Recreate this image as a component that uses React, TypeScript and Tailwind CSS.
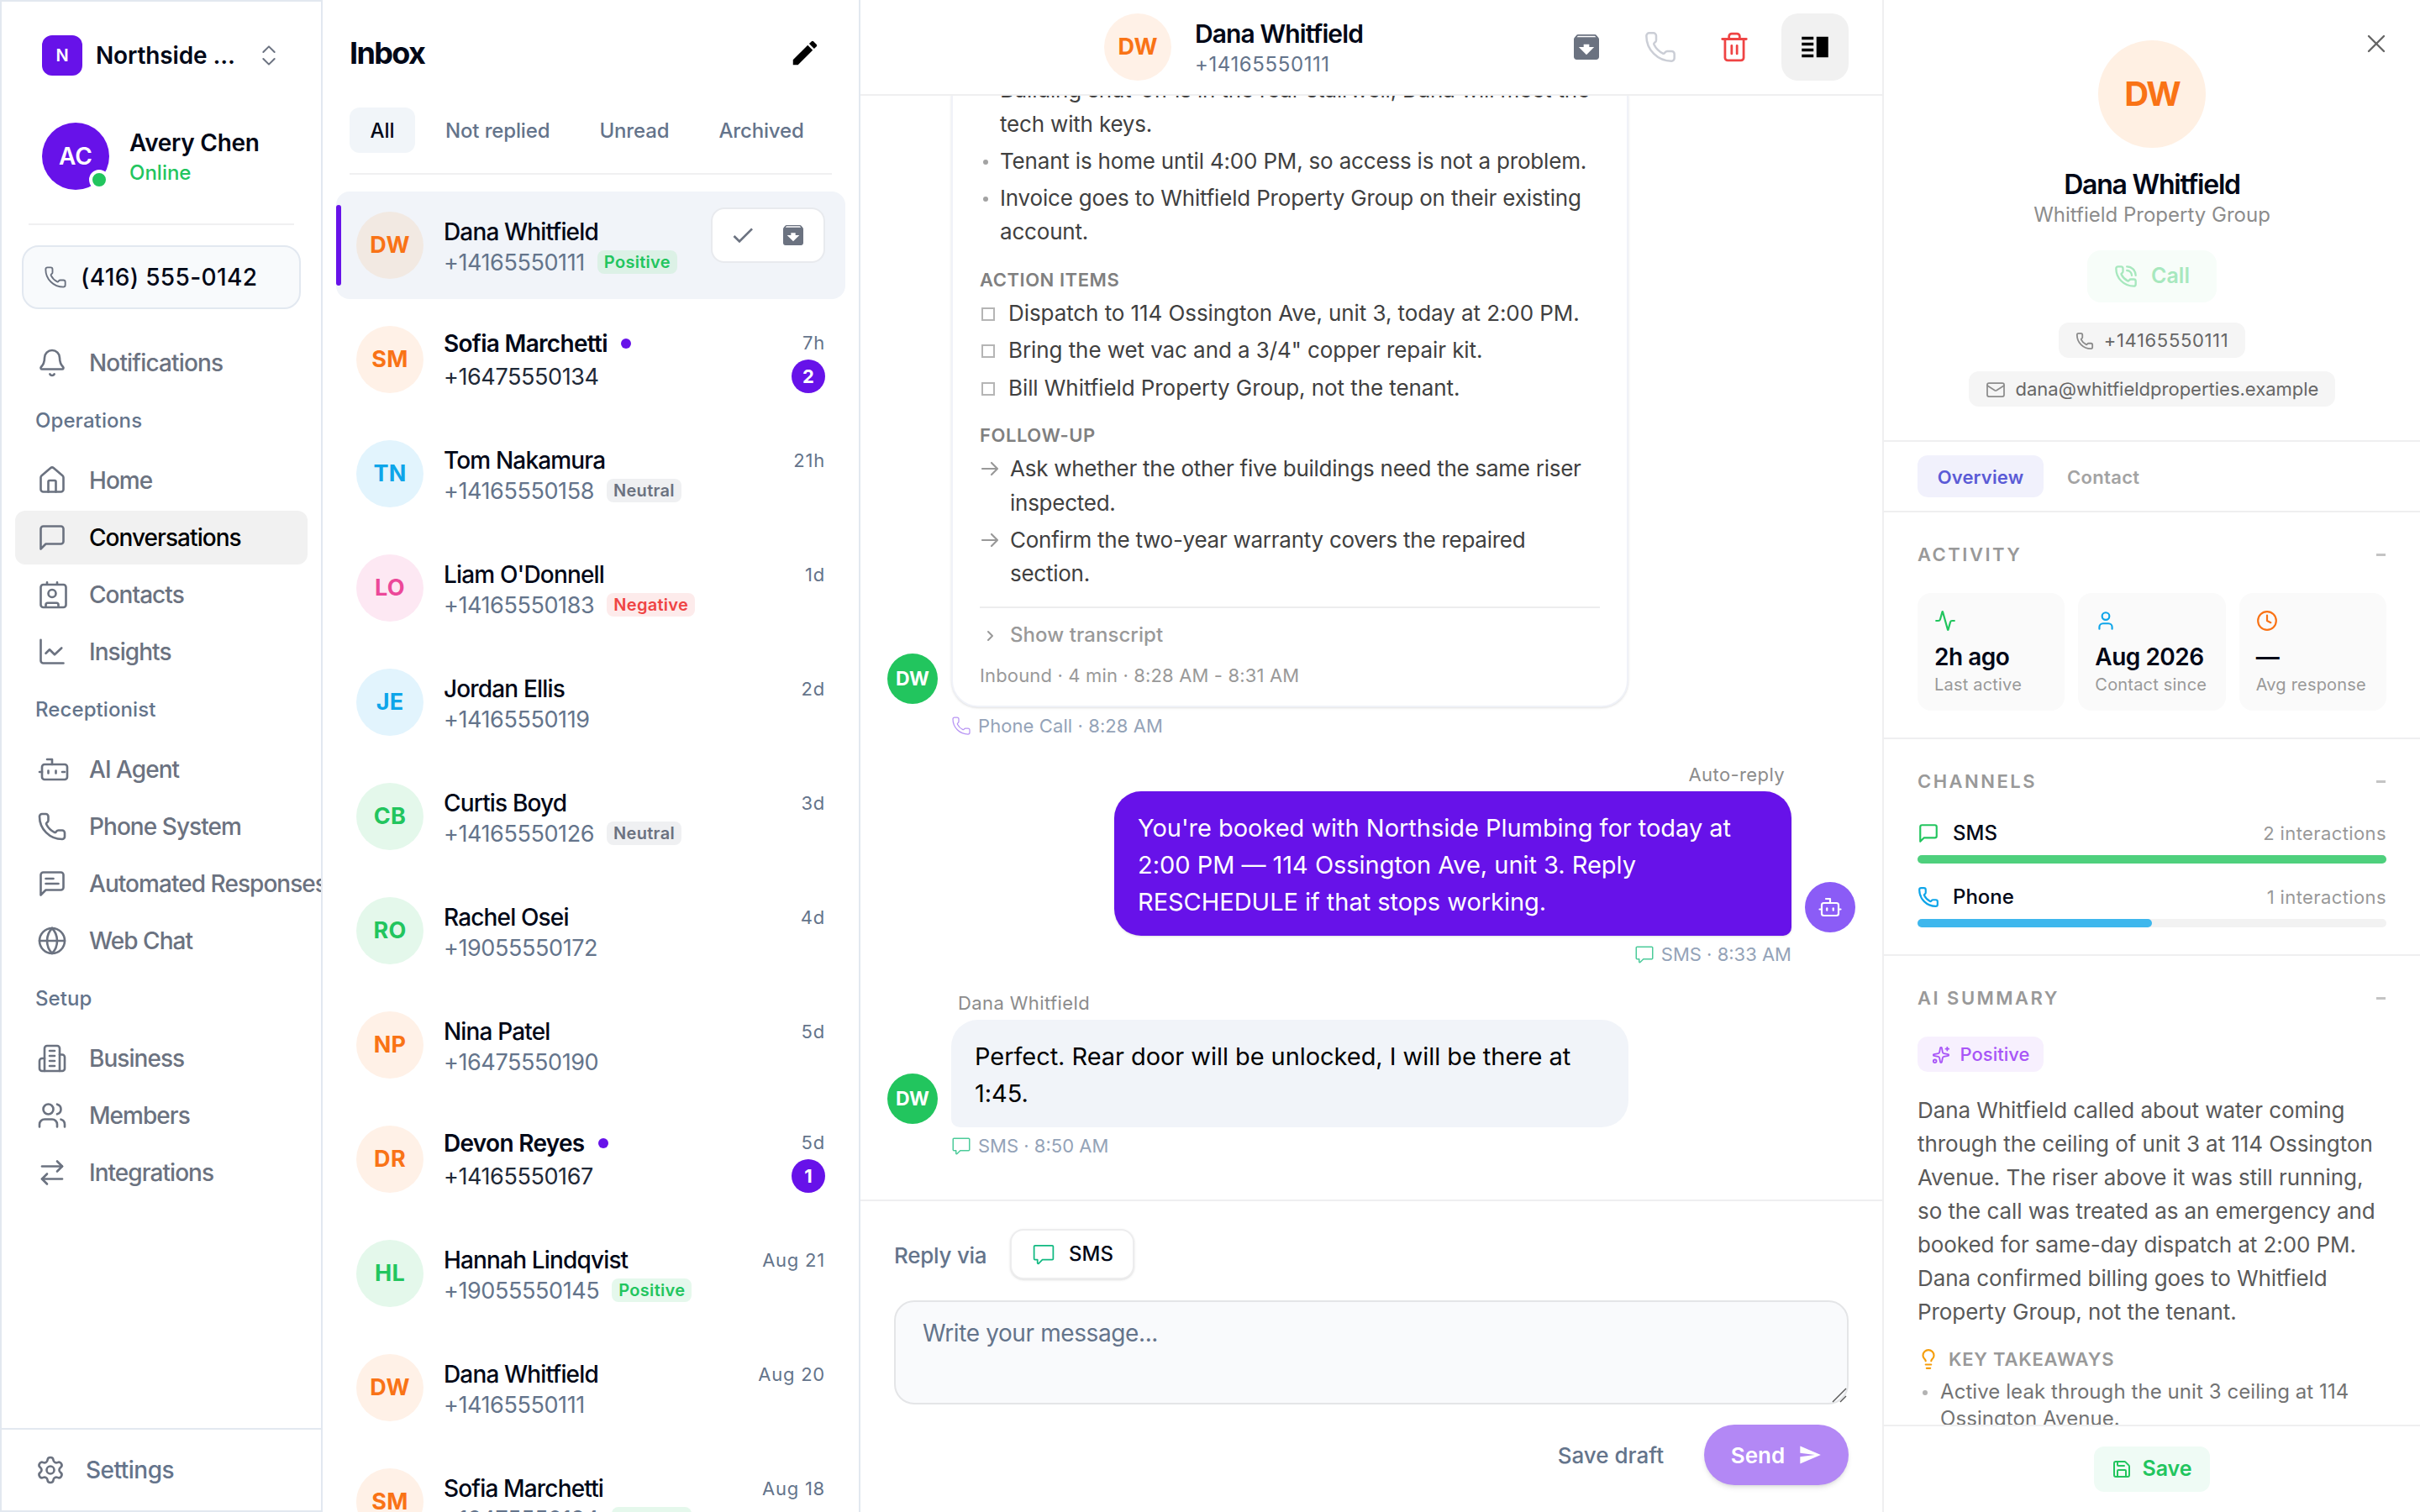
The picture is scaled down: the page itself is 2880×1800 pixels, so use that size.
import type { ReactNode } from "react";
import {
    Activity,
    ArrowRightLeft,
    Bell,
    Bot,
    ChevronsUpDown,
    Clock,
    Globe,
    Lightbulb,
    Mail,
    Phone,
    PhoneCall,
    Save,
    Settings,
    Sparkles,
    Trash2,
    User,
    Users,
    X,
} from "lucide-react";
import { MdArchive, MdCheck, MdEdit, MdSend, MdVerticalSplit } from "react-icons/md";
import { GoComment } from "react-icons/go";

type IconProps = { className?: string; strokeWidth?: number };

function Outline({ className, strokeWidth = 1.75, children }: IconProps & { children: ReactNode }) {
    return (
        <svg viewBox="0 0 24 24" fill="none" stroke="currentColor" strokeWidth={strokeWidth} strokeLinecap="round" strokeLinejoin="round" className={`overflow-visible ${className}`}>
            {children}
        </svg>
    );
}

const HomeIcon = (p: IconProps) => (
    <Outline {...p}>
        <path d="M3 9.7a2 2 0 0 1 .7-1.5l7-6a2 2 0 0 1 2.6 0l7 6a2 2 0 0 1 .7 1.5V19a2 2 0 0 1-2 2H5a2 2 0 0 1-2-2z" />
        <path d="M9 21v-8a1 1 0 0 1 1-1h4a1 1 0 0 1 1 1v8" />
    </Outline>
);

const BubbleIcon = (p: IconProps) => (
    <Outline {...p}>
        <path d="M21 15a2 2 0 0 1-2 2H7l-4 4V5a2 2 0 0 1 2-2h14a2 2 0 0 1 2 2z" />
    </Outline>
);

const BubbleTextIcon = (p: IconProps) => (
    <Outline {...p}>
        <path d="M21 15a2 2 0 0 1-2 2H7l-4 4V5a2 2 0 0 1 2-2h14a2 2 0 0 1 2 2z" />
        <path d="M13 8H7M17 12H7" />
    </Outline>
);

const ContactIcon = (p: IconProps) => (
    <Outline {...p}>
        <rect x="3" y="4" width="20" height="18" rx="2" />
        <circle cx="12" cy="11" r="3" />
        <path d="M8 2.2v1.6M16 2.2v1.6M7 21.5v-1.5a1.5 1.5 0 0 1 1.5-1.5h7a1.5 1.5 0 0 1 1.5 1.5v1.5" />
    </Outline>
);

const InsightsIcon = (p: IconProps) => (
    <Outline {...p}>
        <path d="M3 2.5V19a2 2 0 0 0 2 2h16" />
        <path d="m7 13.2 3-3 4 4 5.5-5.2" />
    </Outline>
);

const AgentIcon = (p: IconProps) => (
    <Outline {...p}>
        <path d="M12 8V4H8" />
        <rect x="4" y="8" width="20" height="12" rx="2" />
        <path d="M2 14h2M20 14h2M15 13v2M9 13v2" />
    </Outline>
);

const BuildingIcon = (p: IconProps) => (
    <Outline {...p}>
        <path d="M6 22V4a2 2 0 0 1 2-2h8a2 2 0 0 1 2 2v18Z" />
        <path d="M6 12H4a2 2 0 0 0-2 2v6a2 2 0 0 0 2 2h2M18 9h2a2 2 0 0 1 2 2v9a2 2 0 0 1-2 2h-2" />
        <path d="M10 6h4M10 10h4M10 14h4M10 18h4" />
    </Outline>
);

const nav = [
    { title: "Operations", items: [
        { label: "Home", icon: HomeIcon },
        { label: "Conversations", icon: BubbleIcon, active: true },
        { label: "Contacts", icon: ContactIcon },
        { label: "Insights", icon: InsightsIcon },
    ] },
    { title: "Receptionist", items: [
        { label: "AI Agent", icon: AgentIcon },
        { label: "Phone System", icon: Phone },
        { label: "Automated Responses", icon: BubbleTextIcon },
        { label: "Web Chat", icon: Globe },
    ] },
    { title: "Setup", items: [
        { label: "Business", icon: BuildingIcon },
        { label: "Members", icon: Users },
        { label: "Integrations", icon: ArrowRightLeft },
    ] },
];

const tones = {
    orange: "bg-[#fff1e7] text-[#f97316]",
    sand: "bg-[#f2e9e2] text-[#f97316]",
    sky: "bg-[#e2f4fd] text-[#0ea5e9]",
    pink: "bg-[#fde8f3] text-[#ec4899]",
    green: "bg-[#e4f8eb] text-[#22c55e]",
};

const moods = {
    Positive: "bg-[#e5f8ec] text-[#22c55e]",
    Neutral: "bg-[#eff0f2] text-[#6b7280]",
    Negative: "bg-[#fdebeb] text-[#ef4444]",
};

type Thread = {
    name: string;
    initials: string;
    phone: string;
    tone: keyof typeof tones;
    mood?: keyof typeof moods;
    time?: string;
    unread?: number;
    selected?: boolean;
};

const threads: Thread[] = [
    { name: "Dana Whitfield", initials: "DW", phone: "+14165550111", tone: "sand", mood: "Positive", selected: true },
    { name: "Sofia Marchetti", initials: "SM", phone: "+16475550134", tone: "orange", time: "7h", unread: 2 },
    { name: "Tom Nakamura", initials: "TN", phone: "+14165550158", tone: "sky", mood: "Neutral", time: "21h" },
    { name: "Liam O'Donnell", initials: "LO", phone: "+14165550183", tone: "pink", mood: "Negative", time: "1d" },
    { name: "Jordan Ellis", initials: "JE", phone: "+14165550119", tone: "sky", time: "2d" },
    { name: "Curtis Boyd", initials: "CB", phone: "+14165550126", tone: "green", mood: "Neutral", time: "3d" },
    { name: "Rachel Osei", initials: "RO", phone: "+19055550172", tone: "green", time: "4d" },
    { name: "Nina Patel", initials: "NP", phone: "+16475550190", tone: "orange", time: "5d" },
    { name: "Devon Reyes", initials: "DR", phone: "+14165550167", tone: "orange", time: "5d", unread: 1 },
    { name: "Hannah Lindqvist", initials: "HL", phone: "+19055550145", tone: "green", mood: "Positive", time: "Aug 21" },
    { name: "Dana Whitfield", initials: "DW", phone: "+14165550111", tone: "orange", time: "Aug 20" },
    { name: "Sofia Marchetti", initials: "SM", phone: "+16475550134", tone: "orange", mood: "Positive", time: "Aug 18" },
];

function Sidebar() {
    return (
        <aside className="flex h-full w-[384px] shrink-0 flex-col overflow-hidden border-2 border-[#e2e8f0] bg-white">
            <div className="mt-10 ml-12 flex h-12 shrink-0 items-center">
                <div className="flex size-12 items-center justify-center rounded-xl bg-[#6712e9] text-[20px] font-semibold text-white">N</div>
                <span className="ml-4 w-[190px] text-[28px] font-semibold tracking-[-0.005em] text-[#020817]">Northside ...</span>
                <ChevronsUpDown className="size-8 text-[#6b7280]" strokeWidth={1.5} />
            </div>
            <div className="mt-14 ml-12 flex h-20 shrink-0 items-center">
                <div className="relative flex size-20 items-center justify-center rounded-full bg-[#6712e9] text-[28px] font-semibold text-white">
                    AC
                    <span className="absolute right-0 bottom-0 size-6 rounded-full border-4 border-white bg-[#22c55e]" />
                </div>
                <div className="mt-1 ml-6">
                    <p className="text-[28px] leading-9 font-semibold tracking-[-0.01em] text-[#020817]">Avery Chen</p>
                    <p className="text-[24px] leading-9 font-medium text-[#22c55e]">Online</p>
                </div>
            </div>
            <div className="mx-8 mt-10 h-0.5 shrink-0 bg-[#f0f0f1]" />
            <div className="mx-6 mt-6 flex h-[76px] shrink-0 items-center rounded-[20px] border-2 border-[#e2e8f0] bg-[#f8fafc] pl-6">
                <Phone className="size-7 text-[#6b7280]" strokeWidth={1.6} />
                <span className="ml-4 text-[28px] font-medium tracking-[0.013em] text-[#020817]">(416) 555-0142</span>
            </div>
            <div className="mt-8 flex h-16 shrink-0 items-center px-4">
                <Bell className="ml-[26px] size-9 text-[#6b7280]" strokeWidth={1.75} />
                <span className="ml-[26px] text-[28px] font-medium tracking-[-0.03em] text-[#6b7280]">Notifications</span>
            </div>
            {nav.map((group) => (
                <div key={group.title} className="shrink-0">
                    <p className="flex h-[76px] items-center pb-[3px] pl-10 text-[24px] font-medium tracking-[0.004em] text-[#64748b]">{group.title}</p>
                    <div className="flex flex-col gap-1 px-4">
                        {group.items.map(({ label, icon: Icon, active }: any) => (
                            <div key={label} className={`flex h-16 items-center rounded-xl ${active ? "bg-[#f1f1f1] text-black" : "text-[#6b7280]"}`}>
                                <Icon className="ml-[26px] size-9 shrink-0 text-[#6b7280]" strokeWidth={1.75} />
                                <span className="ml-[26px] text-[28px] font-medium tracking-[-0.034em] whitespace-nowrap">{label}</span>
                            </div>
                        ))}
                    </div>
                </div>
            ))}
            <div className="mt-auto flex h-[98px] shrink-0 items-center border-t-2 border-[#e2e8f0] pl-10">
                <Settings className="size-9 text-[#6b7280]" strokeWidth={1.75} />
                <span className="ml-6 text-[28px] font-medium tracking-[-0.018em] text-[#64748b]">Settings</span>
            </div>
        </aside>
    );
}

function ThreadRow({ t }: { t: Thread }) {
    return (
        <div className={`relative flex h-32 shrink-0 items-center rounded-2xl px-6 ${t.selected ? "bg-[#f1f4f9]" : ""}`}>
            {t.selected && <span className="absolute left-0 h-24 w-1.5 rounded-sm bg-[#6712e9]" />}
            <div className={`flex size-20 shrink-0 items-center justify-center rounded-full text-[27px] font-bold tracking-[0.01em] ${tones[t.tone]}`}>
                {t.initials}
            </div>
            <div className={`ml-6 flex-1 ${t.unread ? "pt-px" : "pt-[5px]"}`}>
                <p className={`flex items-center text-[28px] text-[#020817] ${t.unread ? "leading-9 font-semibold tracking-[-0.025em]" : "leading-[35px] font-medium tracking-[-0.03em]"}`}>
                    {t.name}
                    {t.unread && <span className="ml-4 size-3 rounded-full bg-[#6712e9]" />}
                </p>
                <p className={`flex items-center text-[27px] tracking-[-0.015em] ${t.unread ? "mt-1 leading-9 text-[#1f2937]" : "leading-[37px] text-[#64748b]"}`}>
                    {t.phone}
                    {t.mood && (
                        <span className={`ml-[15px] flex h-7 items-center rounded-lg px-2 text-[20px] font-semibold tracking-[0.015em] ${t.selected ? "bg-[#dcf1e6] text-[#22c55e]" : moods[t.mood]}`}>
                            {t.mood}
                        </span>
                    )}
                </p>
            </div>
            {t.selected ? (
                <div className="-mt-6 flex h-[66px] w-[136px] items-center justify-between rounded-2xl border-2 border-[#e8eaee] bg-white px-5 text-[#6b7280]">
                    <MdCheck className="size-8" />
                    <MdArchive className="size-8" />
                </div>
            ) : (
                <div className="flex h-20 flex-col items-end text-[22px] leading-8 tracking-[0.035em] text-[#64748b]">
                    <span className={t.unread ? "mt-1" : "mt-2"}>{t.time}</span>
                    {t.unread && (
                        <span className="mt-1 flex size-10 shrink-0 items-center justify-center rounded-full bg-[#6712e9] text-[22px] font-bold tracking-normal text-white">{t.unread}</span>
                    )}
                </div>
            )}
        </div>
    );
}

function Inbox() {
    const tabs = ["Not replied", "Unread", "Archived"];
    return (
        <section className="flex h-full w-[640px] shrink-0 flex-col overflow-hidden border-r-2 border-[#e2e8f0] bg-white">
            <div className="mt-[39px] flex h-12 shrink-0 items-center justify-between px-8">
                <h1 className="text-[36px] font-bold tracking-[-0.045em] text-[#020817]">Inbox</h1>
                <MdEdit className="mr-[13px] size-[38px] text-black" />
            </div>
            <div className="mx-8 mt-[41px] flex h-20 shrink-0 items-start border-b-2 border-[#f0f0f1] text-[24px] font-medium text-[#64748b]">
                <span className="flex h-[54px] w-[78px] items-center justify-center rounded-xl bg-[#f1f5f9] pt-0.5 text-[#020817]">All</span>
                <div className="ml-9 flex h-[54px] items-center gap-[59px] pt-0.5 tracking-[-0.006em]">
                    {tabs.map((t) => (
                        <span key={t}>{t}</span>
                    ))}
                </div>
            </div>
            <div className="mt-5 flex flex-col gap-2 px-4">
                {threads.map((t, i) => (
                    <ThreadRow key={i} t={t} />
                ))}
            </div>
        </section>
    );
}

function CallCard() {
    return (
        <div className="w-[806px] rounded-[32px] border-2 border-[#f0f2f8] bg-white px-8 pb-4 text-[26px] leading-[40.3px] tracking-[-0.007em] text-[#404040] shadow-sm">
            <ul className="flex flex-col gap-1">
                {[
                    "Building shut-off is in the rear stairwell, Dana will meet the tech with keys.",
                    "Tenant is home until 4:00 PM, so access is not a problem.",
                    "Invoice goes to Whitfield Property Group on their existing account.",
                ].map((line) => (
                    <li key={line} className="flex">
                        <span className="mt-[18px] mr-3.5 ml-1 size-1.5 shrink-0 rounded-full bg-[#a3a3a3]" />
                        <span>{line}</span>
                    </li>
                ))}
            </ul>
            <h3 className="mt-4 text-[22px] font-semibold tracking-[0.025em] text-[#808080]">ACTION ITEMS</h3>
            <ul className="flex flex-col gap-1 tracking-[-0.003em]">
                {["Dispatch to 114 Ossington Ave, unit 3, today at 2:00 PM.", 'Bring the wet vac and a 3/4" copper repair kit.', "Bill Whitfield Property Group, not the tenant."].map((line) => (
                    <li key={line} className="flex items-center">
                        <span className="mt-0.5 mr-4 ml-0.5 size-4 border-2 border-[#b5b5b5]" />
                        {line}
                    </li>
                ))}
            </ul>
            <h3 className="mt-4 text-[22px] font-semibold tracking-[0.025em] text-[#808080]">FOLLOW-UP</h3>
            <ul className="flex flex-col gap-1 tracking-[-0.01em]">
                {["Ask whether the other five buildings need the same riser inspected.", "Confirm the two-year warranty covers the repaired section."].map((line) => (
                    <li key={line} className="flex gap-3">
                        <Outline className="mt-2 size-6 shrink-0 text-[#999999]" strokeWidth={2.2}>
                            <path d="M3 12h18M14 5l7 7-7 7" />
                        </Outline>
                        <span>{line}</span>
                    </li>
                ))}
            </ul>
            <div className="mt-[19px] flex items-center border-t-2 border-[#ededee] pt-3 text-[24px] font-medium tracking-[0.003em] text-[#999999]">
                <Outline className="mr-3 size-6" strokeWidth={2}>
                    <path d="m10 7 5 5-5 5" />
                </Outline>
                Show transcript
            </div>
            <p className="mt-[7px] text-[22px] tracking-[0.007em] text-[#999999]">Inbound · 4 min · 8:28 AM - 8:31 AM</p>
        </div>
    );
}

function Chat() {
    return (
        <main className="flex h-full w-[1216px] shrink-0 flex-col overflow-hidden bg-white">
            <header className="flex h-[114px] shrink-0 items-center border-b-2 border-[#efeff0] pl-[290px]">
                <div className="flex size-20 items-center justify-center rounded-full bg-[#fff1e7] text-[27px] font-bold text-[#f97316]">DW</div>
                <div className="mt-1.5 ml-7 w-[440px]">
                    <p className="text-[30px] leading-9 font-semibold tracking-[-0.03em] text-[#020817]">Dana Whitfield</p>
                    <p className="text-[24px] leading-[38px] tracking-[0.025em] text-[#64748b]">+14165550111</p>
                </div>
                <MdArchive className="ml-1.5 size-10 text-[#6b7280]" />
                <Phone className="ml-12 size-10 text-[#cbced6]" strokeWidth={1.5} />
                <Trash2 className="mr-px ml-[49px] size-[38px] text-[#ef4444]" strokeWidth={1.75} />
                <div className="ml-9 flex size-20 items-center justify-center rounded-[20px] bg-[#f1f1f1]">
                    <MdVerticalSplit className="size-[42px] text-black" />
                </div>
            </header>
            <div className="flex flex-1 flex-col justify-end overflow-hidden px-8 pb-11">
                <div className="flex shrink-0 items-end gap-4">
                    <div className="mb-1 flex size-[60px] items-center justify-center rounded-full bg-[#22c55e] text-[23px] font-bold text-white">DW</div>
                    <CallCard />
                </div>
                <p className="mt-0.5 ml-[76px] flex h-10 shrink-0 items-center text-[22px] tracking-[0.004em] text-[#94a3b8]">
                    <Phone className="mr-2 size-6 text-[#b794f4]" strokeWidth={1.25} />
                    Phone Call · 8:28 AM
                </p>
                <p className="mt-5 mr-[84px] flex h-9 shrink-0 items-center justify-end text-[22px] tracking-[0.018em] text-[#8c8c8c]">Auto-reply</p>
                <div className="mt-0.5 flex shrink-0 items-end justify-end gap-4">
                    <div className="w-[806px] rounded-[32px] rounded-br-[10px] bg-[#6712e9] px-7 pt-[22px] pb-[18px] text-[29px] leading-[44px] tracking-[-0.001em] text-white shadow-sm">
                        You're booked with Northside Plumbing for today at 2:00 PM — 114 Ossington Ave, unit 3. Reply RESCHEDULE if that stops working.
                    </div>
                    <div className="mb-1 flex size-[60px] items-center justify-center rounded-full bg-[#8b5cf6] text-white">
                        <Bot className="size-[30px]" strokeWidth={1.75} />
                    </div>
                </div>
                <p className="mt-0.5 mr-[76px] flex h-10 shrink-0 items-center justify-end text-[22px] text-[#94a3b8]">
                    <GoComment className="mr-2 size-6 text-[#4ccb9a]" />
                    SMS · 8:33 AM
                </p>
                <p className="mt-5 ml-[84px] flex h-9 shrink-0 items-center text-[22px] tracking-[0.018em] text-[#8c8c8c]">Dana Whitfield</p>
                <div className="mt-0.5 flex shrink-0 items-end gap-4">
                    <div className="mb-1 flex size-[60px] items-center justify-center rounded-full bg-[#22c55e] text-[23px] font-bold text-white">DW</div>
                    <div className="w-[806px] rounded-[32px] rounded-bl-[10px] bg-[#f1f4f9] px-7 pt-[22px] pb-[18px] text-[29px] leading-[44px] tracking-[-0.002em] text-black">
                        Perfect. Rear door will be unlocked, I will be there at 1:45.
                    </div>
                </div>
                <p className="mt-0.5 ml-[76px] flex h-10 shrink-0 items-center text-[22px] text-[#94a3b8]">
                    <GoComment className="mr-2 size-6 text-[#4ccb9a]" />
                    SMS · 8:50 AM
                </p>
            </div>
            <footer className="h-[372px] shrink-0 border-t-2 border-[#efeff0] px-10 pt-8">
                <div className="flex h-16 items-center">
                    <span className="w-[138px] text-[26px] font-medium tracking-[-0.01em] whitespace-nowrap text-[#64748b]">Reply via</span>
                    <div className="mb-0.5 flex h-[60px] w-[148px] items-center rounded-2xl border-2 border-[#ededee] bg-white pl-6 text-[24px] font-medium text-[#020817] shadow-sm">
                        <GoComment className="mr-4 size-7 text-[#10b981]" />
                        SMS
                    </div>
                </div>
                <div className="relative mt-[22px] h-[124px]">
                    <textarea
                        className="block h-full w-full resize-none rounded-[24px] border-2 border-[#e4e5e7] bg-[#f9fafc] px-8 py-4 text-[28px] tracking-[-0.014em] placeholder:text-[#64748b]"
                        placeholder="Write your message..."
                    />
                    <svg viewBox="0 0 18 18" className="absolute right-0.5 bottom-0.5 size-[18px] stroke-[#555555]" strokeWidth="1.4">
                        <path d="M1 17 17 1M10 17l7-7" />
                    </svg>
                </div>
                <div className="mt-6 flex items-center justify-end">
                    <span className="mr-12 text-[26px] font-medium text-[#64748b]">Save draft</span>
                    <div className="flex h-[72px] w-[172px] items-center justify-center gap-4 rounded-full bg-[#b388f5] text-[26px] font-semibold text-white shadow-md">
                        Send
                        <MdSend className="size-7" />
                    </div>
                </div>
            </footer>
        </main>
    );
}

function Section({ title, children }: { title: string; children: ReactNode }) {
    return (
        <section className="shrink-0 border-b-2 border-[#efeff0] px-10 pt-[30px] pb-8">
            <div className="mb-[26px] flex h-10 items-center justify-between text-[22px] font-semibold tracking-[0.113em] text-[#999999]">
                {title}
                <span className="mr-px h-[3px] w-[11px] bg-[#c4c4c4]" />
            </div>
            {children}
        </section>
    );
}

const stats = [
    { icon: Activity, color: "text-[#22c55e]", value: "2h ago", label: "Last active" },
    { icon: User, color: "text-[#0ea5e9]", value: "Aug 2026", label: "Contact since" },
    { icon: Clock, color: "text-[#f97316]", value: "—", label: "Avg response" },
];

const channels = [
    { icon: BubbleIcon, name: "SMS", count: 2, color: "text-[#22c55e]", bar: "bg-[#4ed07d]" },
    { icon: Phone, name: "Phone", count: 1, color: "text-[#0ea5e9]", bar: "bg-[#3eb7ed]" },
];

function Details() {
    return (
        <aside className="flex h-full w-[640px] shrink-0 flex-col overflow-hidden border-l-2 border-[#efeff0] bg-white">
            <div className="relative flex h-[526px] shrink-0 flex-col items-center border-b-2 border-[#efeff0] pt-12">
                <X className="absolute top-[34px] right-[34px] size-9 text-[#666666]" strokeWidth={1.6} />
                <div className="flex size-32 items-center justify-center rounded-full bg-[#fff0e3] text-[40px] font-bold tracking-[-0.05em] text-[#f97316]">DW</div>
                <h2 className="mt-[26px] text-[32px] leading-9 font-semibold tracking-[-0.038em] text-[#020817]">Dana Whitfield</h2>
                <p className="text-[24px] leading-9 text-[#8c8c8c]">Whitfield Property Group</p>
                <div className="mt-6 flex h-[62px] w-[154px] items-center justify-center gap-4 rounded-2xl bg-[#f7fdf9] text-[25px] font-semibold text-[#a7e8be]">
                    <PhoneCall className="size-7" />
                    Call
                </div>
                <div className="mt-6 flex h-[42px] items-center gap-3 rounded-xl bg-[#f5f5f5] px-5 pt-px text-[22px] tracking-[0.03em] text-[#666666]">
                    <Phone className="size-[22px] text-[#8c8c8c]" />
                    +14165550111
                </div>
                <div className="mt-4 flex h-[42px] items-center gap-3 rounded-xl bg-[#f5f5f5] px-5 pt-px text-[22px] text-[#666666]">
                    <Mail className="size-6 text-[#8c8c8c]" strokeWidth={1.75} />
                    dana@whitfieldproperties.example
                </div>
            </div>
            <div className="flex h-[84px] shrink-0 items-center border-b-2 border-[#efeff0] px-10 text-[22px] font-semibold tracking-[0.008em]">
                <span className="flex h-[50px] w-[150px] items-center justify-center rounded-xl bg-[#f1f1fc] pt-0.5 text-[#5b5bd6]">Overview</span>
                <span className="ml-7 pt-0.5 tracking-[0.015em] text-[#a3a3a3]">Contact</span>
            </div>
            <div className="flex flex-1 flex-col overflow-hidden">
                <Section title="ACTIVITY">
                    <div className="grid grid-cols-3 gap-4">
                        {stats.map(({ icon: Icon, color, value, label }) => (
                            <div key={label} className="flex h-[140px] flex-col rounded-2xl bg-[#fafafa] pt-5 pl-5">
                                <Icon className={`size-[26px] ${color}`} />
                                <p className="mt-3 text-[28px] leading-9 font-semibold tracking-[-0.018em] text-[#020817]">{value}</p>
                                <p className="mt-px text-[20px] leading-7 tracking-[0.01em] whitespace-nowrap text-[#999999]">{label}</p>
                            </div>
                        ))}
                    </div>
                </Section>
                <Section title="CHANNELS">
                    <div className="flex flex-col gap-6">
                        {channels.map(({ icon: Icon, name, count, color, bar }) => (
                            <div key={name}>
                                <div className="flex h-8 items-center">
                                    <Icon className={`size-[26px] ${color}`} strokeWidth={2} />
                                    <span className="ml-4 text-[24px] font-medium text-[#020817]">{name}</span>
                                    <span className="ml-auto text-[22px] tracking-[0.018em] text-[#999999]">{count} interactions</span>
                                </div>
                                <div className="mt-2.5 h-2.5 rounded-full bg-[#f2f2f2]">
                                    <div className={`h-full rounded-full ${bar}`} style={{ width: `${count * 50}%` }} />
                                </div>
                            </div>
                        ))}
                    </div>
                </Section>
                <Section title="AI SUMMARY">
                    <div className="flex h-[42px] w-[150px] items-center justify-center gap-3 rounded-xl bg-[#f7f0fe] pt-px text-[22px] font-medium text-[#a855f7]">
                        <Sparkles className="size-[22px]" />
                        Positive
                    </div>
                    <p className="mt-[26px] text-[26px] leading-10 tracking-[-0.003em] text-[#595959]">
                        Dana Whitfield called about water coming through the ceiling of unit 3 at 114 Ossington Avenue. The riser above it was still running, so the call was treated as an emergency and booked for same-day dispatch at 2:00 PM. Dana confirmed billing goes to Whitfield Property Group, not the tenant.
                    </p>
                    <h4 className="mt-4 flex h-10 items-center gap-[11px] text-[22px] font-semibold tracking-[0.035em] text-[#999999]">
                        <Lightbulb className="size-[26px] text-[#f59e0b]" />
                        KEY TAKEAWAYS
                    </h4>
                    <div className="mt-[3px] flex text-[24px] leading-8 tracking-[0.003em] text-[#737373]">
                        <span className="mt-3.5 mr-[15px] ml-1.5 size-1.5 shrink-0 rounded-full bg-[#b3b3b3]" />
                        Active leak through the unit 3 ceiling at 114 Ossington Avenue.
                    </div>
                </Section>
            </div>
            <div className="flex h-[104px] shrink-0 items-center justify-center border-t-2 border-[#efeff0]">
                <div className="flex h-[54px] w-[138px] items-center justify-center gap-3 rounded-xl bg-[#effbf5] text-[25px] font-semibold text-[#22c55e]">
                    <Save className="size-6" />
                    Save
                </div>
            </div>
        </aside>
    );
}

export default function App() {
    return (
        <div className="flex h-[1800px] w-[2880px] overflow-hidden bg-white font-['Inter',sans-serif]">
            <Sidebar />
            <Inbox />
            <Chat />
            <Details />
        </div>
    );
}
